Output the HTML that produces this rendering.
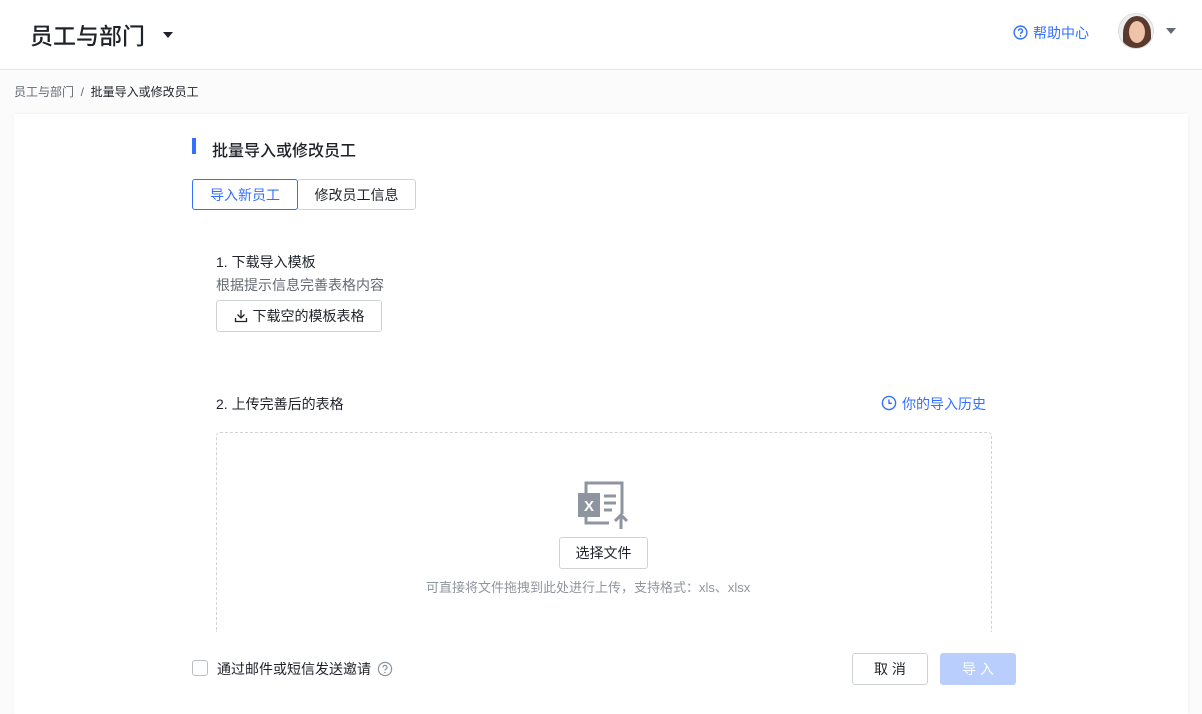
<!DOCTYPE html>
<html><head><meta charset="utf-8"><style>
*{margin:0;padding:0;box-sizing:border-box}
body{width:1202px;height:708px;overflow:hidden;background:#fbfbfc;font-family:"Liberation Sans","Noto Sans CJK SC",sans-serif;color:#1f2329;position:relative}
.hdr{position:absolute;left:0;top:0;width:1202px;height:70px;background:#fff;border-bottom:1px solid #e5e6e8}
.abs{position:absolute}
.card{position:absolute;left:14px;top:114px;width:1174px;height:600px;background:#fff;box-shadow:0 0 4px rgba(0,0,0,.06)}
.btn{position:absolute;border:1px solid #d0d3d6;border-radius:3px;background:#fff;font-size:14px;display:flex;align-items:center;justify-content:center;color:#1f2329}
</style></head><body>
<div class="hdr">
<div class="abs" style="left:30px;top:17px;font-size:23px;color:#1f2329;font-weight:500">员工与部门</div>
<div class="abs" style="left:163px;top:32px;width:0;height:0;border-left:5px solid transparent;border-right:5px solid transparent;border-top:6px solid #1f2329"></div>
<svg class="abs" style="left:1013px;top:25px" width="15" height="15" viewBox="0 0 16 16"><circle cx="8" cy="8" r="6.8" fill="none" stroke="#3370ff" stroke-width="1.5"/><path d="M5.9 6.3a2.1 2.1 0 1 1 3 1.9c-.6.3-.9.7-.9 1.4" fill="none" stroke="#3370ff" stroke-width="1.5"/><circle cx="8" cy="11.6" r=".9" fill="#3370ff"/></svg>
<div class="abs" style="left:1033px;top:23px;font-size:14px;color:#3370ff">帮助中心</div>
<div class="abs" style="left:1118px;top:13px;width:36px;height:36px;border-radius:50%;overflow:hidden;background:#eee;border:1px solid #ddd"><div style="position:absolute;left:4px;top:2px;width:28px;height:34px;border-radius:50% 50% 30% 30%;background:#5a3a2c"></div><div style="position:absolute;left:10px;top:7px;width:16px;height:22px;border-radius:50%;background:#efc3aa"></div></div>
<div class="abs" style="left:1166px;top:28px;width:0;height:0;border-left:5px solid transparent;border-right:5px solid transparent;border-top:6px solid #646a73"></div>
</div>
<div class="abs" style="left:14px;top:83px;font-size:12px;color:#646a73">员工与部门 &nbsp;/&nbsp; <span style="color:#1f2329">批量导入或修改员工</span></div>
<div class="card"></div>
<div class="abs" style="left:192px;top:138px;width:4px;height:16px;background:#3370ff"></div>
<div class="abs" style="left:212px;top:137px;font-size:16px;font-weight:500">批量导入或修改员工</div>
<div class="btn" style="left:192px;top:179px;width:106px;height:31px;border-color:#3370ff;color:#3370ff;z-index:2">导入新员工</div>
<div class="btn" style="left:297px;top:179px;width:119px;height:31px">修改员工信息</div>
<div class="abs" style="left:216px;top:252px;font-size:14px">1. 下载导入模板</div>
<div class="abs" style="left:216px;top:275px;font-size:14px;color:#646a73">根据提示信息完善表格内容</div>
<div class="btn" style="left:216px;top:300px;width:166px;height:32px"><svg width="14" height="14" viewBox="0 0 14 14" style="margin-right:5px"><path d="M7 1v8M3.5 5.5 7 9l3.5-3.5M1.5 9v3.5h11V9" fill="none" stroke="#1f2329" stroke-width="1.3"/></svg>下载空的模板表格</div>
<div class="abs" style="left:216px;top:394px;font-size:14px">2. 上传完善后的表格</div>
<svg class="abs" style="left:881px;top:395px" width="16" height="16" viewBox="0 0 16 16"><circle cx="8" cy="8" r="6.6" fill="none" stroke="#3370ff" stroke-width="1.4"/><path d="M8 4.5V8.3h3" fill="none" stroke="#3370ff" stroke-width="1.4"/></svg>
<div class="abs" style="left:902px;top:394px;font-size:14px;color:#3370ff">你的导入历史</div>
<div class="abs" style="left:216px;top:432px;width:776px;height:200px;border:1px dashed #d0d3d6;border-bottom:none;border-radius:4px 4px 0 0"></div>
<svg class="abs" style="left:578px;top:481px" width="52" height="48" viewBox="0 0 52 48"><rect x="8" y="2" width="36" height="40" fill="none" stroke="#8f959e" stroke-width="3"/><rect x="0" y="12" width="22" height="24" fill="#8f959e"/><text x="11" y="30" font-size="15" font-weight="bold" fill="#fff" text-anchor="middle" font-family="Liberation Sans">X</text><path d="M26 15h12M26 22h12M26 29h8" stroke="#8f959e" stroke-width="3"/><rect x="31" y="33" width="24" height="15" fill="#fff"/><path d="M43 48V35M37 40l6-6 6 6" fill="none" stroke="#8f959e" stroke-width="3"/></svg>
<div class="btn" style="left:559px;top:537px;width:89px;height:32px">选择文件</div>
<div class="abs" style="left:426px;top:577px;font-size:13px;color:#8f959e">可直接将文件拖拽到此处进行上传，支持格式：xls、xlsx</div>
<div class="abs" style="left:192px;top:660px;width:16px;height:16px;border:1px solid #bbbfc4;border-radius:3px"></div>
<div class="abs" style="left:217px;top:659px;font-size:14px">通过邮件或短信发送邀请</div>
<svg class="abs" style="left:377px;top:661px" width="16" height="16" viewBox="0 0 16 16"><circle cx="8" cy="8" r="6.6" fill="none" stroke="#8f959e" stroke-width="1.2"/><path d="M6 6.4a2 2 0 1 1 2.8 1.8c-.5.3-.8.6-.8 1.3" fill="none" stroke="#8f959e" stroke-width="1.2"/><circle cx="8" cy="11.5" r=".8" fill="#8f959e"/></svg>
<div class="btn" style="left:852px;top:653px;width:76px;height:32px">取 消</div>
<div class="btn" style="left:940px;top:653px;width:76px;height:32px;background:#bacefd;border-color:#bacefd;color:#fff">导 入</div>
</body></html>
